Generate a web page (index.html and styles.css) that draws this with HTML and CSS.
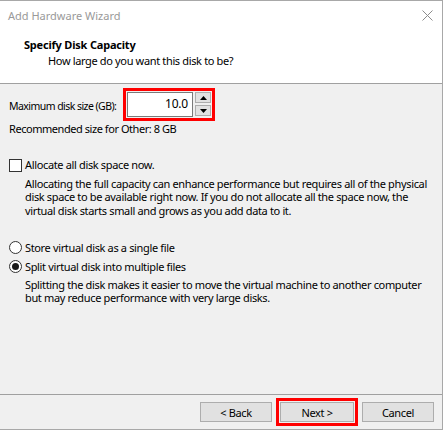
FILE: index.html
```html
<!DOCTYPE html>
<html>
<head>
<meta charset="utf-8">
<link rel="stylesheet" href="styles.css">
</head>
<body>
<div class="window">
  <div class="titlebar">
    <span class="title">Add Hardware Wizard</span>
    <svg class="close" width="11" height="11" viewBox="0 0 11 11"><path d="M0.5 0.5 L10.5 10.5 M10.5 0.5 L0.5 10.5" stroke="#8c8c8c" stroke-width="1"/></svg>
  </div>
  <div class="header">
    <div class="h-title">Specify Disk Capacity</div>
    <div class="h-sub">How large do you want this disk to be?</div>
  </div>
  <div class="body">
    <div class="size-row">
      <span class="size-label">Maximum disk size (GB):</span>
      <div class="hl">
        <div class="spinner">
          <div class="spin-input">10.0</div>
          <div class="spin-btns">
            <div class="spin-btn"><svg width="7" height="4" viewBox="0 0 7 4"><path d="M3.5 0 L7 4 L0 4 Z" fill="#000"/></svg></div>
            <div class="spin-btn"><svg width="7" height="4" viewBox="0 0 7 4"><path d="M0 0 L7 0 L3.5 4 Z" fill="#000"/></svg></div>
          </div>
        </div>
      </div>
    </div>
    <div class="rec">Recommended size for Other: 8 GB</div>

    <div class="opt check-row"><span class="checkbox"></span><span>Allocate all disk space now.</span></div>
    <p class="desc">Allocating the full capacity can enhance performance but requires all of the physical disk space to be available right now. If you do not allocate all the space now, the virtual disk starts small and grows as you add data to it.</p>

    <div class="opt radio-row first"><span class="radio"></span><span>Store virtual disk as a single file</span></div>
    <div class="opt radio-row"><span class="radio on"></span><span>Split virtual disk into multiple files</span></div>
    <p class="desc desc2">Splitting the disk makes it easier to move the virtual machine to another computer but may reduce performance with very large disks.</p>
  </div>
  <div class="footer">
    <button class="btn">&lt; Back</button>
    <div class="hl-btn"><button class="btn btn-next">Next &gt;</button></div>
    <button class="btn">Cancel</button>
  </div>
</div>
</body>
</html>
```

FILE: styles.css
```css
html, body {
  margin: 0;
  padding: 0;
  background: #ffffff;
}
body {
  font-family: "Noto Sans", "Open Sans", sans-serif;
  font-size: 11px;
  letter-spacing: -0.35px;
  color: #000;
  width: 446px;
  height: 432px;
  overflow: hidden;
}
.window {
  width: 443px;
  height: 430px;
  box-sizing: border-box;
  border-top: 1px solid #a8a8a8;
  border-right: 1px solid #a8a8a8;
  border-bottom: 1px solid #a8a8a8;
  display: flex;
  flex-direction: column;
  background: #fff;
}
.titlebar {
  height: 29px;
  flex: none;
  display: flex;
  align-items: center;
  justify-content: space-between;
  padding: 0 9px 0 8px;
  box-sizing: border-box;
}
.title {
  color: #999999;
  font-size: 11px;
  letter-spacing: 0;
  line-height: 16px;
  margin-top: 1px;
}
.header {
  height: 54px;
  flex: none;
  box-sizing: border-box;
  padding-top: 7px;
  border-bottom: 1px solid #a0a0a0;
  background: #fff;
}
.h-title {
  font-weight: bold;
  line-height: 16px;
  padding-left: 24px;
  letter-spacing: -0.2px;
}
.h-sub {
  line-height: 16px;
  padding-left: 48px;
}
.body {
  flex: 1;
  background: #f0f0f0;
  padding: 4px 8px 0 9px;
}
.size-row {
  display: flex;
  align-items: center;
  height: 33px;
}
.size-label {
  line-height: 16px;
  margin-top: 3px;
  width: 114px;
  white-space: nowrap;
  font-size: 10.5px;
  letter-spacing: -0.55px;
  flex: none;
}
.hl {
  border: 3px solid #ff0000;
  padding: 1px 1px 2px 1px;
  box-sizing: border-box;
  height: 33px;
  display: flex;
}
.spinner {
  display: flex;
  gap: 2px;
}
.spin-input {
  width: 66px;
  height: 25px;
  box-sizing: border-box;
  border: 1px solid #7a7a7a;
  background: #fff;
  text-align: right;
  padding-right: 4px;
  line-height: 21px;
  font-size: 12px;
  letter-spacing: -0.2px;
}
.spin-btns {
  width: 16px;
  display: flex;
  flex-direction: column;
  justify-content: center;
  gap: 2px;
}
.spin-btn {
  height: 9px;
  border: 1px solid #adadad;
  background: #e1e1e1;
  display: flex;
  align-items: center;
  justify-content: center;
}
.rec {
  line-height: 16px;
  letter-spacing: -0.45px;
}
.opt {
  display: flex;
  align-items: center;
  height: 16px;
  line-height: 16px;
}
.check-row {
  margin-top: 20px;
}
.checkbox {
  width: 13px;
  height: 13px;
  box-sizing: border-box;
  border: 1px solid #333;
  background: #fff;
  margin-right: 3px;
  flex: none;
}
.desc {
  margin: 4px 0 0 16px;
  line-height: 13.3px;
}
.radio-row.first {
  margin-top: 23px;
}
.radio-row {
  margin-top: 3px;
}
.radio {
  width: 13px;
  height: 13px;
  box-sizing: border-box;
  border: 1px solid #333;
  border-radius: 50%;
  background: #fff;
  margin-right: 3px;
  flex: none;
  display: flex;
  align-items: center;
  justify-content: center;
}
.radio.on::after {
  content: "";
  width: 7px;
  height: 7px;
  border-radius: 50%;
  background: #1a1a1a;
}
.desc2 {
  margin-top: 3px;
}
.footer {
  height: 34px;
  flex: none;
  border-top: 1px solid #a0a0a0;
  background: #f0f0f0;
  display: flex;
  justify-content: flex-end;
  align-items: center;
  padding-right: 8px;
  gap: 4px;
}
.btn {
  width: 72px;
  height: 20px;
  border: 1px solid #adadad;
  background: #e1e1e1;
  font-family: inherit;
  font-size: 11px;
  letter-spacing: -0.35px;
  color: #000;
  padding: 0;
}
.btn-next {
  width: 74px;
  display: block;
}
.hl-btn {
  border: 3px solid #ff0000;
  padding: 1px;
  background: #f0f0f0;
}
```
